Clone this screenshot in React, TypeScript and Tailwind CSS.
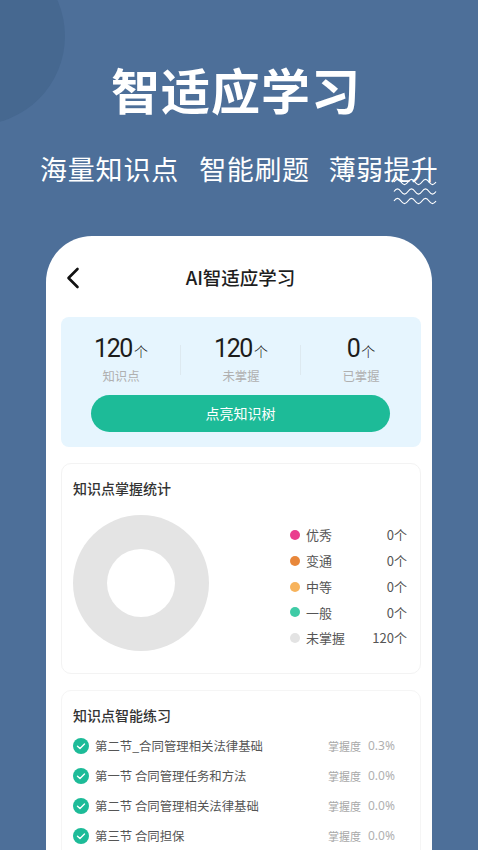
import React from "react";

const font = { fontFamily: '"Noto Sans CJK SC", "Noto Sans", sans-serif' };

const legend = [
  { c: "bg-[#ea3d8e]", n: "优秀", v: "0个" },
  { c: "bg-[#e8873a]", n: "变通", v: "0个" },
  { c: "bg-[#f7b35c]", n: "中等", v: "0个" },
  { c: "bg-[#3fcba6]", n: "一般", v: "0个" },
  { c: "bg-[#e3e3e3]", n: "未掌握", v: "120个" },
];

const rows = [
  { t: "第二节_合同管理相关法律基础", p: "0.3%" },
  { t: "第一节 合同管理任务和方法", p: "0.0%" },
  { t: "第二节 合同管理相关法律基础", p: "0.0%" },
  { t: "第三节 合同担保", p: "0.0%" },
];

function Stat({ n, l, last }: { n: string; l: string; last?: boolean }) {
  return (
    <div className="relative flex-1 flex flex-col items-center">
      <div className="flex items-baseline h-[30px] leading-[30px] mt-[1px] text-[#1c1c1c]">
        <span className="text-[25px] tracking-[-1.4px] mr-[2px]" style={{ fontFamily: 'Roboto, sans-serif' }}>{n}</span>
        <span className="text-[14px] font-light">个</span>
      </div>
      <div className="text-[12.4px] leading-[18px] mt-[3px] text-[#b0b0b0]">{l}</div>
      {!last && <div className="absolute right-0 top-[12px] w-px h-[30px] bg-[#dde9f0]" />}
    </div>
  );
}

export default function App() {
  return (
    <div className="relative w-[478px] h-[850px] overflow-hidden bg-[#4d6f99] flex flex-col items-center" style={font}>
      <div className="absolute -left-[113px] -top-[53px] w-[178px] h-[178px] rounded-full bg-[#466890]" />

      <h1 className="relative mt-[53px] mr-[6px] h-[72px] leading-[72px] text-[49px] font-bold text-white tracking-[1px]">智适应学习</h1>

      <div className="relative mt-[24px] w-[398px] flex justify-between text-[27px] leading-[40px] text-white">
        <span className="tracking-[0.8px]">海量知识点</span>
        <span className="tracking-[0.6px] ml-[1px]">智能刷题</span>
        <span className="tracking-[0.3px]">薄弱提升</span>
        <svg className="absolute right-[1px] top-[29px]" width="44" height="27" viewBox="0 0 44 27" fill="none" stroke="#ffffff" strokeWidth="1.2">
          <path d="M1 4c2.500-3.500 4.500-3.500 7 0s4.500 3.500 7 0 4.500-3.500 7 0 4.500 3.500 7 0 4.500-3.500 7 0 4.500 3.500 7 0" />
          <path d="M1 13.500c2.500-3.500 4.500-3.500 7 0s4.500 3.500 7 0 4.500-3.500 7 0 4.500 3.500 7 0 4.500-3.500 7 0 4.500 3.500 7 0" />
          <path d="M1 23c2.500-3.500 4.500-3.500 7 0s4.500 3.500 7 0 4.500-3.500 7 0 4.500 3.500 7 0 4.500-3.500 7 0 4.500 3.500 7 0" />
        </svg>
      </div>

      <div className="relative mt-[47px] w-[386px] flex-1 bg-white rounded-t-[46px] pl-[15px] pr-[11px]">
        <div className="relative h-[81px] flex items-center justify-center">
          <svg className="absolute left-[5px] top-[31px]" width="14" height="22" viewBox="0 0 14 22" fill="none" stroke="#111111" strokeWidth="2.6" strokeLinecap="round" strokeLinejoin="round">
            <path d="M11.500 2 2.500 11l9 9" />
          </svg>
          <span className="text-[18.5px] font-medium text-[#1e1e1e] mt-[2px] mr-[1px]">AI智适应学习</span>
        </div>

        <div className="h-[130px] rounded-[8px] bg-[#e6f5fe] pt-[16px]">
          <div className="flex h-[62px]">
            <Stat n="120" l="知识点" />
            <Stat n="120" l="未掌握" />
            <Stat n="0" l="已掌握" last />
          </div>
          <button className="ml-[30px] w-[299px] h-[37px] rounded-full bg-[#1dbb98] text-white text-[14px] block">点亮知识树</button>
        </div>

        <div className="mt-[16px] h-[211px] rounded-[10px] border border-[#f3f3f3] px-[11px] pt-[14px]">
          <div className="text-[14px] leading-[20px] font-medium text-[#333333]">知识点掌握统计</div>
          <div className="mt-[17px] flex items-start justify-between">
            <div className="w-[136px] h-[136px] rounded-full bg-[#e4e4e4] flex items-center justify-center">
              <div className="w-[68px] h-[68px] rounded-full bg-white" />
            </div>
            <div className="mt-[10px] w-[117px] flex flex-col gap-[5.75px] mr-[2px]">
              {legend.map((x) => (
                <div key={x.n} className="flex items-center h-[20px] text-[13px] text-[#555555]">
                  <span className={"w-[10px] h-[10px] rounded-full " + x.c} />
                  <span className="ml-[6px]">{x.n}</span>
                  <span className="ml-auto">{x.v}</span>
                </div>
              ))}
            </div>
          </div>
        </div>

        <div className="mt-[16px] rounded-t-[10px] border border-[#f5f5f5] px-[11px] pt-[14px] h-[200px]">
          <div className="text-[14px] leading-[20px] font-medium text-[#333333]">知识点智能练习</div>
          <div className="mt-[6px] flex flex-col">
            {rows.map((r) => (
              <div key={r.t} className="h-[30px] flex items-center">
                <svg width="16" height="16" viewBox="0 0 16 16" fill="none">
                  <circle cx="8" cy="8" r="8" fill="#1dbb98" />
                  <path d="M4.500 8.200 7 10.500l4.500-4.500" stroke="#ffffff" strokeWidth="1.400" strokeLinecap="round" strokeLinejoin="round" />
                </svg>
                <span className="ml-[6px] text-[12.4px] text-[#555555]">{r.t}</span>
                <span className="ml-auto text-[11px] text-[#a8a8a8]">掌握度</span>
                <span className="ml-[7px] mr-[12px] text-[12px] text-[#b0b0b0] w-[29px]" style={{ fontFamily: '"Noto Sans", sans-serif' }}>{r.p}</span>
              </div>
            ))}
          </div>
        </div>
      </div>
    </div>
  );
}
